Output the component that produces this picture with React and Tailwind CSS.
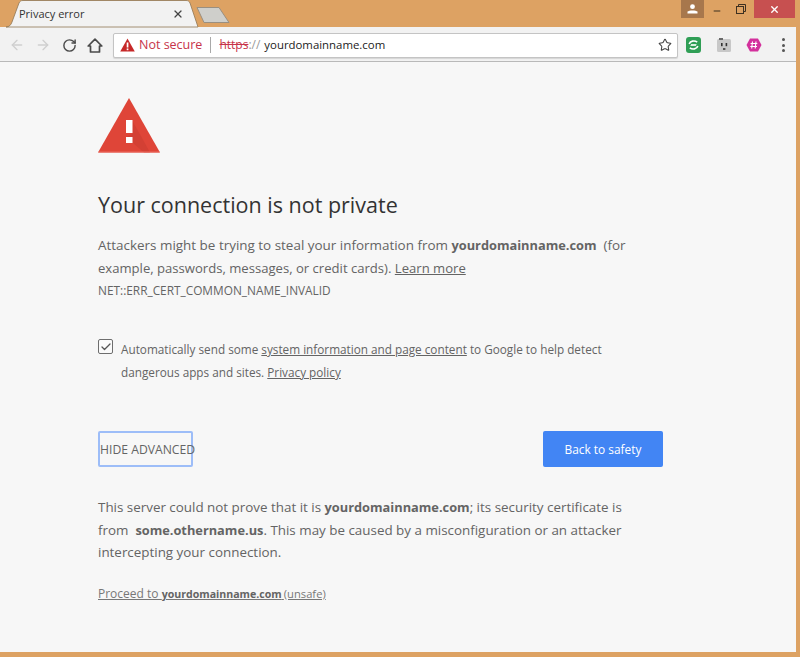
import { ArrowLeft, ArrowRight, RotateCw, Star, X, Minus, Check } from 'lucide-react';

const PAGE_FONT = "font-['Open_Sans','Noto_Sans',sans-serif]";

function WarningSmall() {
    return (
        <svg width="15" height="14" viewBox="0 0 15 14" className="shrink-0">
            <path d="M7.5 0.5 L14.8 13.5 H0.2 Z" fill="#c62828" />
            <rect x="6.7" y="4.5" width="1.7" height="5" fill="#fff" />
            <rect x="6.7" y="10.5" width="1.7" height="1.7" fill="#fff" />
        </svg>
    );
}

function WarningLarge() {
    return (
        <svg width="62" height="55" viewBox="0 0 62 55" className="block">
            <path d="M31 0 L62 54.5 H0 Z" fill="#df4538" />
            <path d="M34.5 23 L44 40 L52 54.5 H46 L28 39 L34.5 36 Z" fill="#c93c31" opacity="0.55" />
            <path d="M0.5 54 H61.5" stroke="#ec6a5e" strokeWidth="1" />
            <rect x="28" y="22" width="6.5" height="13" fill="#fff" />
            <rect x="28" y="39" width="6.5" height="6" fill="#fff" />
        </svg>
    );
}

function HomeIcon() {
    return (
        <svg width="16" height="15" viewBox="0 0 16 15" fill="none" stroke="#4b4b4b" strokeWidth="1.7" className="ml-[10px]">
            <path d="M8 1.2 L14.8 8 H12.5 V14 H3.5 V8 H1.2 Z" strokeLinejoin="round" />
        </svg>
    );
}

function TabStrip() {
    return (
        <div className="relative flex h-[27px] shrink-0 items-start justify-between bg-[#dda263]">
            <div className="relative ml-[6px] flex h-[27px] w-[193px] items-center">
                <svg width="193" height="28" viewBox="0 0 193 28" className="absolute left-0 top-0">
                    <path d="M0 27 C3 27 5 25 6 22 L13 3 C14 1 15 0.5 17 0.5 H180 C182 0.5 183 1 184 3 L192 27 Z" fill="#f2f2f2" stroke="#8f7654" strokeWidth="0.8" />
                </svg>
                <span className={`relative ml-[13px] pt-[1px] text-[11px] text-[#333] ${PAGE_FONT}`}>Privacy error</span>
                <X size={12} strokeWidth={2.4} className="absolute left-[166px] top-[8px] text-[#444]" />
            </div>
            <svg width="36" height="18" viewBox="0 0 36 18" className="absolute left-[196px] top-[6px]">
                <path d="M1 1.5 H23 L33 16.5 H8 Z" fill="#cfcfcb" stroke="#9a8f80" strokeWidth="1" strokeLinejoin="round" />
            </svg>
            <div className="flex items-start pr-[1px]">
                <div className="flex h-[18px] w-[23px] items-center justify-center bg-[#a7774c]">
                    <svg width="11" height="10" viewBox="0 0 11 10">
                        <circle cx="5.5" cy="2.7" r="2.4" fill="#fff" />
                        <path d="M0.5 9.5 V7.6 C2 6 9 6 10.5 7.6 V9.5 Z" fill="#fff" />
                    </svg>
                </div>
                <div className="flex h-[18px] w-[25px] items-center justify-center">
                    <Minus size={10} strokeWidth={2.4} className="mt-[4px] text-[#3d3020]" />
                </div>
                <div className="flex h-[18px] w-[24px] items-center justify-center">
                    <svg width="10" height="10" viewBox="0 0 10 10" fill="none" stroke="#3d3020" strokeWidth="1">
                        <path d="M2.5 2.5 V0.5 H9.5 V7.5 H7.5" />
                        <rect x="0.5" y="2.5" width="7" height="7" />
                    </svg>
                </div>
                <div className="ml-[1px] flex h-[18px] w-[41px] items-center justify-center bg-[#c75050]">
                    <X size={11} strokeWidth={3} className="text-white" />
                </div>
            </div>
        </div>
    );
}

function ExtensionIcons() {
    return (
        <div className="flex items-center">
            <svg width="15" height="16" viewBox="0 0 15 16" className="ml-[8px]">
                <rect x="0" y="0" width="15" height="16" rx="3" fill="#2f9e55" />
                <path d="M3.2 7 C4 4 8.5 3 11.2 5.2 M11.8 9 C11 12 6.5 13 3.8 10.8" fill="none" stroke="#fff" strokeWidth="1.6" />
                <path d="M5 7.6 H10.5 M4.5 8.4 H10" stroke="#fff" strokeWidth="0.9" />
            </svg>
            <svg width="14" height="14" viewBox="0 0 14 14" className="ml-[16px]">
                <rect x="0" y="1" width="14" height="13" rx="1.5" fill="#c8c8c8" />
                <rect x="2" y="0" width="4" height="2" fill="#6a6a6a" />
                <rect x="4" y="5" width="1.6" height="3.2" fill="#333" />
                <rect x="8.6" y="5" width="1.6" height="3.2" fill="#333" />
                <rect x="6" y="10" width="2.4" height="2" fill="#555" />
            </svg>
            <svg width="16" height="14" viewBox="0 0 16 14" className="ml-[15px]">
                <path d="M4 0.5 H12 L15.5 7 L12 13.5 H4 L0.5 7 Z" fill="#d3309c" />
                <path d="M6.5 3.5 L5.7 10.5 M10 3.5 L9.2 10.5 M4.6 5.5 H11.3 M4.3 8.5 H11" stroke="#fff" strokeWidth="1.1" />
            </svg>
            <div className="ml-[20px] flex flex-col gap-[2.5px]">
                <span className="block h-[3px] w-[3px] rounded-full bg-[#555]" />
                <span className="block h-[3px] w-[3px] rounded-full bg-[#555]" />
                <span className="block h-[3px] w-[3px] rounded-full bg-[#555]" />
            </div>
        </div>
    );
}

function Toolbar() {
    return (
        <div className="flex h-[35px] shrink-0 items-center border-b border-[#b9b9b9] bg-[#f2f2f2] pt-[2px]">
            <ArrowLeft size={16} strokeWidth={2} className="ml-[9px] text-[#cfcfcf]" />
            <ArrowRight size={16} strokeWidth={2} className="ml-[10px] text-[#cfcfcf]" />
            <RotateCw size={15} strokeWidth={2.3} className="ml-[11px] text-[#4b4b4b]" />
            <HomeIcon />
            <div className="ml-[10px] flex h-[25px] w-[565px] items-center rounded-[2px] border border-[#c4c4c4] bg-white pl-[6px] pr-[5px] shadow-[0_1px_1px_rgba(0,0,0,0.12)]">
                <WarningSmall />
                <span className={`ml-[4px] text-[12.5px] text-[#c7334a] ${PAGE_FONT}`}>Not secure</span>
                <span className="ml-[8px] h-[16px] w-px bg-[#a9a9a9]" />
                <span className={`ml-[8px] text-[12px] text-[#c7334a] line-through ${PAGE_FONT}`}>https</span>
                <span className={`text-[12px] text-[#9a9a9a] ${PAGE_FONT}`}>://</span>
                <span className={`ml-[4px] text-[11.4px] text-[#222] ${PAGE_FONT}`}>yourdomainname.com</span>
                <Star size={14} strokeWidth={1.8} className="ml-auto text-[#444]" />
            </div>
            <ExtensionIcons />
        </div>
    );
}

function ErrorPage() {
    return (
        <main className={`flex-1 bg-[#f7f7f7] pl-[98px] text-[#646464] ${PAGE_FONT}`}>
            <div className="w-[565px] pt-[36px]">
                <WarningLarge />
                <h1 className="mt-[38px] text-[21.5px] leading-[28px] text-[#333]">Your connection is not private</h1>
                <p className="mt-[15px] text-[13.45px] leading-[23px]">
                    Attackers might be trying to steal your information from <b className="text-[12.8px] font-bold">yourdomainname.com</b>&nbsp; (for <span className="text-[13.1px]">example, passwords, messages, or credit cards). <u>Learn more</u></span>
                </p>
                <p className="mt-[2px] text-[11.85px] leading-[16px]">NET::ERR_CERT_COMMON_NAME_INVALID</p>

                <div className="mt-[40px] flex items-start">
                    <span className="mt-[1px] flex h-[15px] w-[15px] shrink-0 items-center justify-center rounded-[2px] border border-[#6e6e6e] bg-[#fafafa]">
                        <Check size={12} strokeWidth={2.6} className="text-[#555]" />
                    </span>
                    <p className="ml-[8px] w-[520px] text-[11.75px] leading-[23px]">
                        Automatically send some <u>system information and page content</u> to Google to help detect dangerous apps and sites. <u>Privacy policy</u>
                    </p>
                </div>

                <div className="mt-[47px] flex items-center justify-between">
                    <button className="h-[36px] w-[95px] whitespace-nowrap rounded-[2px] border-2 border-[#9dbdf8] pt-[2px] text-[12.2px] text-[#646464]">HIDE ADVANCED</button>
                    <button className="h-[36px] w-[120px] rounded-[2px] bg-[#4285f4] pt-[1px] text-[11.9px] text-white">Back to safety</button>
                </div>

                <p className="mt-[29px] w-[535px] text-[13.4px] leading-[22.5px]">
                    This server could not prove that it is <b className="text-[12.8px] font-bold">yourdomainname.com</b>; its security certificate is from&nbsp; <b className="text-[12.8px] font-bold">some.othername.us</b>. This may be caused by a misconfiguration or an attacker intercepting your connection.
                </p>
                <p className="mt-[20px] text-[12px] leading-[20px] text-[#777] underline">
                    Proceed to <b className="text-[10.6px] font-bold text-[#646464]">yourdomainname.com</b><span className="text-[8px]"> </span><span className="text-[11.2px]">(unsafe)</span>
                </p>
            </div>
        </main>
    );
}

export default function App() {
    return (
        <div className="flex h-[657px] w-[800px] flex-col overflow-hidden bg-[#dda263] pb-[5px] pr-[4px]">
            <TabStrip />
            <Toolbar />
            <ErrorPage />
        </div>
    );
}
